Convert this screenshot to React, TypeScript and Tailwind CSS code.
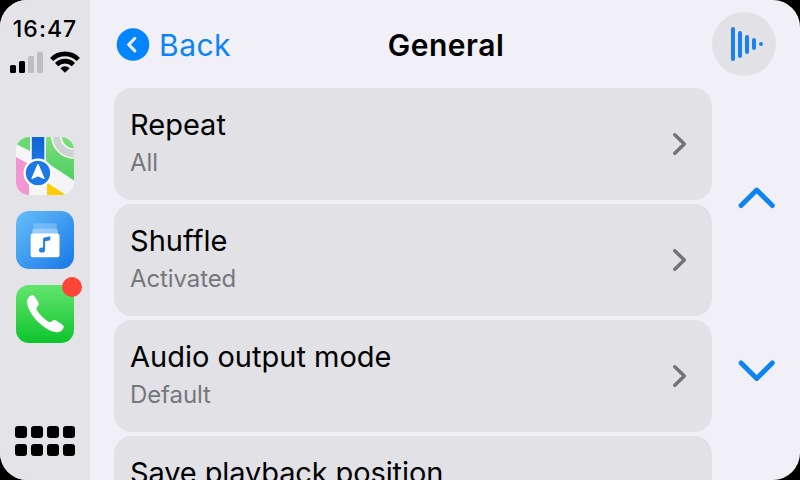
import React from "react";

const rows = [
  { title: "Repeat", value: "All", spacing: "tracking-normal" },
  { title: "Shuffle", value: "Activated", spacing: "tracking-[0.05px]" },
  { title: "Audio output mode", value: "Default", spacing: "tracking-normal" },
  { title: "Save playback position", value: "", spacing: "tracking-[-0.12px]" },
];

function SignalBars() {
  return (
    <div className="flex h-[21px] items-end gap-[3px]">
      <span className="h-2 w-1.5 rounded-[1.5px] bg-black" />
      <span className="h-3 w-1.5 rounded-[1.5px] bg-black" />
      <span className="h-[17px] w-1.5 rounded-[1.5px] bg-[#bdbdc2]" />
      <span className="h-[21px] w-1.5 rounded-[1.5px] bg-[#bdbdc2]" />
    </div>
  );
}

function WifiIcon() {
  return (
    <svg width="30" height="22" viewBox="0 0 30 22" fill="none" stroke="#000" strokeWidth="4.6">
      <path d="M1.7 8.5a18.6 18.6 0 0 1 26.6 0" />
      <path d="M6.6 13.6a12 12 0 0 1 16.8 0" />
      <path d="M15 21.8l-4.600-4.500a6.400 6.400 0 0 1 9.200 0z" fill="#000" stroke="none" />
    </svg>
  );
}

function MapsIcon() {
  return (
    <svg width="58" height="58" viewBox="0 0 58 58">
      <defs>
        <clipPath id="maps-clip"><rect width="58" height="58" rx="13" /></clipPath>
        <linearGradient id="maps-green" x1="0" y1="0" x2="0" y2="1">
          <stop offset="0" stopColor="#7be07c" /><stop offset="1" stopColor="#4fce62" />
        </linearGradient>
        <linearGradient id="maps-blue" x1="0" y1="0" x2="0" y2="1">
          <stop offset="0" stopColor="#1262d0" /><stop offset="1" stopColor="#1c7bee" />
        </linearGradient>
      </defs>
      <g clipPath="url(#maps-clip)">
        <rect width="58" height="58" fill="#f5f5f7" />
        <path d="M0 0h14v14L0 7z" fill="#6bd873" />
        <path d="M0 20l13 7v31H0z" fill="#f096d3" />
        <path d="M30 0h28v43.5L30 25z" fill="url(#maps-green)" />
        <path d="M31 45.5L50 58H31z" fill="#fccc07" />
        <circle cx="58" cy="-1" r="17.6" fill="none" stroke="#fff" strokeWidth="10.4" />
        <circle cx="58" cy="-1" r="17.6" fill="none" stroke="#d0d2d4" strokeWidth="7.6" />
        <rect x="15.8" width="12.5" height="30" fill="url(#maps-blue)" />
        <circle cx="22" cy="36" r="14.5" fill="#fff" />
        <circle cx="22" cy="36" r="12.2" fill="#1b78e4" />
        <path d="M22 27.6l6 13.8-6-2.6-6 2.6z" fill="#fff" stroke="#fff" strokeWidth="1.2" strokeLinejoin="round" />
      </g>
    </svg>
  );
}

function MusicIcon() {
  return (
    <svg width="58" height="58" viewBox="0 0 58 58">
      <defs>
        <linearGradient id="music-bg" x1="0" y1="0" x2="1" y2="1">
          <stop offset="0" stopColor="#67bff9" /><stop offset="1" stopColor="#1777e6" />
        </linearGradient>
      </defs>
      <rect width="58" height="58" rx="13" fill="url(#music-bg)" />
      <path d="M17.3 18v-4q0-1.7 1.7-1.7h20q1.7 0 1.7 1.7v4z" fill="#fff" opacity=".22" />
      <path d="M16.3 23v-3.5q0-1.8 1.8-1.8h21.8q1.8 0 1.8 1.8V23z" fill="#fff" opacity=".45" />
      <rect x="14.7" y="22.6" width="28.8" height="23.6" rx="2" fill="#fff" />
      <ellipse cx="26" cy="39" rx="3" ry="2.6" fill="#2480e2" />
      <path d="M27.1 39V28q0-1.200 1.200-1.500l6-1.200v3.900l-5.200 1.100V39z" fill="#2480e2" />
    </svg>
  );
}

function PhoneIcon() {
  return (
    <svg width="58" height="58" viewBox="0 0 58 58">
      <defs>
        <linearGradient id="phone-bg" x1="0" y1="0" x2="0" y2="1">
          <stop offset="0" stopColor="#64e56e" /><stop offset="1" stopColor="#0dc42d" />
        </linearGradient>
      </defs>
      <rect width="58" height="58" rx="13" fill="url(#phone-bg)" />
      <path
        d="M11.600 14Q12.800 11 16 10.300Q17.700 10 18.700 11.500L22.500 17.500Q23.500 19.500 21.700 21.200Q19.800 23 20.800 25Q25 32 32.500 36.700Q34.500 37.800 36.300 36Q38 34.200 40.200 35.500L46.700 39.700Q48.500 41.200 47.400 43.200Q45.500 47 41 47.200Q35 47.200 27 41.300Q17 33.700 12.400 23Q10.300 17.500 11.600 14Z"
        fill="#fff"
      />
    </svg>
  );
}

function Sidebar() {
  return (
    <aside className="flex h-full w-[90px] shrink-0 flex-col items-center bg-[#e3e3e8]">
      <div className="mt-4 h-[26px] text-[23px] leading-[26px] font-[550] tracking-[1.05px] whitespace-nowrap">16:47</div>
      <div className="mt-[9px] flex w-full items-end gap-[7px] pl-2.5">
        <SignalBars />
        <WifiIcon />
      </div>
      <nav className="mt-16 flex flex-col gap-4">
        <MapsIcon />
        <MusicIcon />
        <div className="relative">
          <PhoneIcon />
          <span className="absolute -top-2 -right-2 size-5 rounded-full bg-[#fe4537]" />
        </div>
      </nav>
      <div className="mt-auto mb-6 grid grid-cols-4 gap-x-1 gap-y-1.5">
        {Array.from({ length: 8 }, (_, i) => (
          <span key={i} className="size-3 rounded-[3px] bg-black" />
        ))}
      </div>
    </aside>
  );
}

function Header() {
  return (
    <header className="flex h-[88px] shrink-0 items-center pr-6 pl-[26px]">
      <div className="flex flex-1 items-center gap-[9px] text-[#0a84f8]">
        <svg width="34" height="34" viewBox="0 0 34 34">
          <circle cx="17" cy="17.500" r="16.300" fill="#0285ff" />
          <path d="M18.900 11.300L12.700 17.600l6.200 6.300" fill="none" stroke="#f1f0f6" strokeWidth="3" strokeLinecap="round" strokeLinejoin="round" />
        </svg>
        <span className="pt-0.5 text-[30px] leading-9 tracking-[0.5px]">Back</span>
      </div>
      <h1 className="pt-0.5 text-[30px] leading-9 font-semibold tracking-[0.5px]">General</h1>
      <div className="flex flex-1 justify-end">
        <div className="flex size-16 items-center justify-center gap-[3px] rounded-full bg-[#e1e1e6] pl-1.5">
          <span className="h-[34px] w-1 rounded-full bg-[#1a82e8]" />
          <span className="h-[27px] w-1 rounded-full bg-[#1a82e8]" />
          <span className="h-[19px] w-1 rounded-full bg-[#1a82e8]" />
          <span className="h-3 w-1 rounded-full bg-[#1a82e8]" />
          <span className="size-1 rounded-full bg-[#1a82e8]" />
        </div>
      </div>
    </header>
  );
}

export default function App() {
  return (
    <div className="h-[480px] w-[800px] overflow-hidden bg-black font-['Inter','Liberation_Sans',sans-serif] text-black">
      <div className="flex h-full overflow-hidden rounded-[27px] bg-[#f1f0f6]">
        <Sidebar />
        <main className="flex min-w-0 flex-1 flex-col">
          <Header />
          <div className="flex min-h-0 flex-1 pl-6">
            <div className="flex w-[598px] flex-col gap-1 overflow-hidden">
              {rows.map((row) => (
                <div key={row.title} className="flex h-28 shrink-0 items-center justify-between rounded-[18px] bg-[#e2e1e6] pr-[25px] pl-4">
                  <div className="flex flex-col gap-[5px] self-start pt-[19px]">
                    <div className={`text-[29px] leading-9 whitespace-nowrap ${row.spacing}`}>{row.title}</div>
                    {row.value && (
                      <div className="text-[24px] leading-[30px] tracking-[-0.1px] text-[#77777b]">{row.value}</div>
                    )}
                  </div>
                  <svg width="15" height="24" viewBox="0 0 15 24" fill="none" stroke="#737377" strokeWidth="3.500" strokeLinecap="round" strokeLinejoin="round">
                    <path d="M2.800 2.800L12.300 12l-9.500 9.200" />
                  </svg>
                </div>
              ))}
            </div>
            <div className="flex flex-1 flex-col items-center pt-[97px]">
              <svg width="40" height="26" viewBox="0 0 40 26" fill="none" stroke="#0d84f2" strokeWidth="4.900" strokeLinecap="round" strokeLinejoin="round">
                <path d="M5.100 20.600L20.700 5l15.600 15.600" />
              </svg>
              <svg className="mt-[147px]" width="40" height="26" viewBox="0 0 40 26" fill="none" stroke="#0d84f2" strokeWidth="4.900" strokeLinecap="round" strokeLinejoin="round">
                <path d="M5.100 4.900l15.600 15.600 15.600-15.600" />
              </svg>
            </div>
          </div>
        </main>
      </div>
    </div>
  );
}
